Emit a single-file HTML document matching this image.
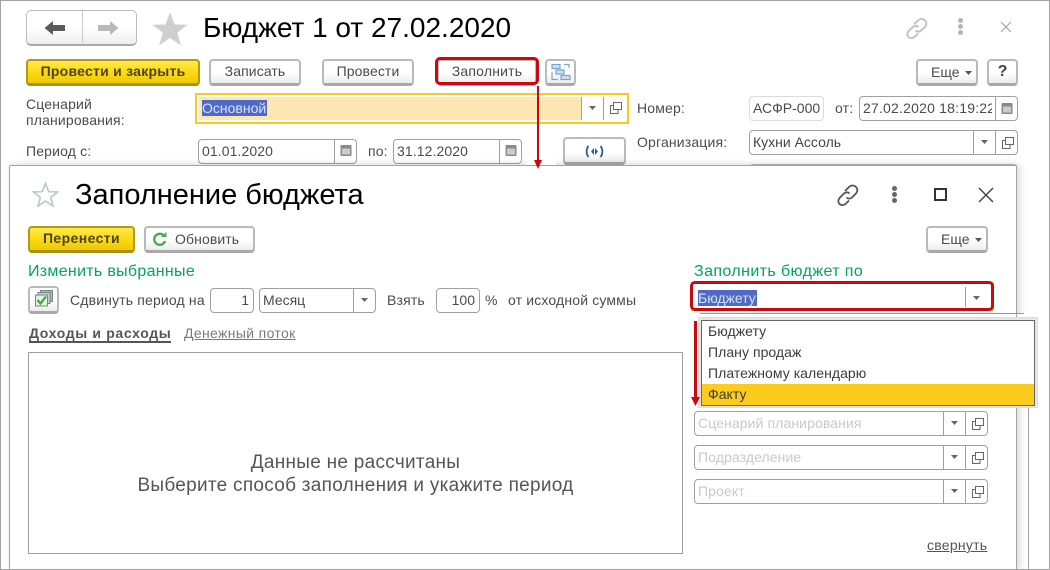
<!DOCTYPE html>
<html><head><meta charset="utf-8">
<style>
html,body{margin:0;padding:0}
body{width:1050px;height:570px;overflow:hidden;position:relative;background:#fff;font-family:"Liberation Sans",sans-serif;font-size:14px;color:#4b4b4b}
#r{position:absolute;left:0;top:0;width:1050px;height:570px;overflow:hidden}
#r div,#r svg{position:absolute;box-sizing:border-box}
.t{white-space:nowrap;line-height:16px;letter-spacing:.16px}
.btn{background:linear-gradient(#fff 0%,#fff 55%,#ececec 100%);border:2px solid #bababa;border-bottom:3px solid #a9a9a9;border-radius:4px;text-align:center;line-height:21px;white-space:nowrap;color:#4b4b4b;letter-spacing:.1px}
.y{background:linear-gradient(#ffe94f 0%,#fddc16 45%,#eec900 100%);border:2px solid #b39a12;border-bottom:3px solid #a99010;font-weight:bold;color:#4a4420;letter-spacing:.25px}
.i{background:#fff;border:1px solid #a0a0a0;border-radius:4px;line-height:22px;padding-left:3px;white-space:nowrap;overflow:hidden;color:#4b4b4b}
.v{width:1px;background:#a0a0a0}
.sel{background:#5068c6;color:#d5e4f7;line-height:16px;white-space:nowrap}
.ph{color:#c9c9c9;white-space:nowrap;line-height:16px;letter-spacing:.1px}
.g{font-size:16px;color:#00a463;letter-spacing:.3px}
.m{color:#3c3c3c;letter-spacing:.05px}
</style></head><body><div id="r">

<!-- nav -->
<div style="left:26px;top:10px;width:111px;height:36px;border:1px solid #bbb;border-bottom:2px solid #aaa;border-radius:5px;background:linear-gradient(#fff 50%,#eee)"></div>
<div class="v" style="left:82px;top:11px;height:34px;background:#ccc"></div>
<svg style="left:44px;top:20px" width="22" height="16" viewBox="0 0 22 16"><path d="M0.5 8L9 1V5H21V11H9V15Z" fill="#5a5a5a"/></svg>
<svg style="left:97px;top:20px" width="22" height="16" viewBox="0 0 22 16"><path d="M21.500 8L13 1V5H1V11H13V15Z" fill="#b8b8b8"/></svg>
<svg style="left:152px;top:12px" width="36" height="34" viewBox="0 0 36 34"><path d="M18 0.500L22.500 12.500L35.500 12.800L25.200 20.800L29 33.500L18 26L7 33.500L10.800 20.800L0.500 12.800L13.500 12.500Z" fill="#cfcfcf"/></svg>
<div class="t" style="left:203px;top:12px;font-size:28px;line-height:32px;color:#000;letter-spacing:0">Бюджет 1 от 27.02.2020</div>

<!-- top-right icons -->
<svg style="left:904px;top:15px" width="25" height="25" viewBox="0 0 25 25" fill="none" stroke="#c4c4c4" stroke-width="2"><path d="M10 9L14 5.500C16 3.500 19 3.500 21 5.500C23 7.500 22.500 10 21 12L17 15.500C15.500 17 13 17 11.500 15.500"/><path d="M14.500 12C13 10.500 11 10.500 9 12L4.500 16C3 18 3 20.500 4.500 22C6.500 23.500 9 23.500 11 21.500L14 18.500"/></svg>
<div style="left:958px;top:18px;width:5px;height:5px;border-radius:3px;background:#b5b5b5"></div>
<div style="left:958px;top:24px;width:5px;height:5px;border-radius:3px;background:#b5b5b5"></div>
<div style="left:958px;top:30px;width:5px;height:5px;border-radius:3px;background:#b5b5b5"></div>
<svg style="left:1000px;top:21px" width="12" height="12" viewBox="0 0 12 12"><path d="M1 1L11 11M11 1L1 11" stroke="#a5a5a5" stroke-width="1.200"/></svg>

<!-- toolbar -->
<div class="btn y" style="left:26px;top:59px;width:174px;height:27px">Провести и закрыть</div>
<div class="btn" style="left:209px;top:59px;width:92px;height:27px">Записать</div>
<div class="btn" style="left:322px;top:59px;width:92px;height:27px">Провести</div>
<div class="btn" style="left:437px;top:59px;width:100px;height:27px;letter-spacing:.2px">Заполнить</div>
<div style="left:435px;top:57px;width:104px;height:28px;border:3px solid #c9080f;border-radius:5px"></div>
<div class="btn" style="left:545px;top:59px;width:31px;height:27px"></div>
<svg style="left:551px;top:63px" width="20" height="18" viewBox="0 0 20 18" fill="none" stroke="#7aa5c9" stroke-width="1.200"><rect x="1" y="1.500" width="8" height="4" fill="#cfe0ee"/><rect x="5" y="7" width="8" height="4" fill="#cfe0ee"/><rect x="10" y="12.500" width="9" height="4" fill="#cfe0ee"/><path d="M13 1.500H18V5M1 9V16.500H7"/></svg>
<div class="btn" style="left:916px;top:59px;width:62px;height:27px"></div>
<div class="t" style="left:931px;top:64px;letter-spacing:0">Еще</div>
<svg style="left:965px;top:71px" width="7" height="4"><path d="M0 0H7L3.500 4Z" fill="#555"/></svg>
<div class="btn" style="left:987px;top:59px;width:31px;height:27px;font-weight:bold;font-size:16px;color:#444">?</div>

<!-- form row 1 -->
<div class="t" style="left:26px;top:96px">Сценарий</div>
<div class="t" style="left:26px;top:112px">планирования:</div>
<div style="left:195px;top:93px;width:434px;height:31px;border:2px solid #fbc91d;background:#fff"></div>
<div style="left:199px;top:97px;width:382px;height:23px;background:#fde6b1"></div>
<div class="sel" style="left:202px;top:100px;width:65px;height:16px">Основной</div>
<div class="v" style="left:581px;top:97px;height:23px"></div>
<div class="v" style="left:603px;top:97px;height:23px"></div>
<svg style="left:588px;top:105px" width="9" height="6"><path d="M1 1H8L4.500 5Z" fill="#666"/></svg>
<svg style="left:610px;top:102px" width="12" height="12" viewBox="0 0 12 12" fill="none" stroke="#666"><rect x="3.500" y="0.500" width="8" height="7"/><path d="M3.500 3.500H0.500V11.500H8V7.500"/></svg>

<div class="t" style="left:637px;top:100px">Номер:</div>
<div class="i" style="left:749px;top:96px;width:75px;height:25px;border-color:#dcdcdc">АСФР-000</div>
<div class="t" style="left:835px;top:100px">от:</div>
<div class="i" style="left:859px;top:96px;width:159px;height:25px"><span style="display:block;width:129px;overflow:hidden;letter-spacing:.2px">27.02.2020 18:19:22</span></div>
<div class="v" style="left:995px;top:97px;height:23px"></div>

<!-- form row 2 -->
<div class="t" style="left:26px;top:143px">Период с:</div>
<div class="i" style="left:198px;top:139px;width:159px;height:25px;letter-spacing:.1px">01.01.2020</div>
<div class="v" style="left:334px;top:140px;height:24px"></div>
<div class="t" style="left:368px;top:143px">по:</div>
<div class="i" style="left:393px;top:139px;width:129px;height:25px;letter-spacing:.1px">31.12.2020</div>
<div class="v" style="left:499px;top:140px;height:24px"></div>
<svg style="left:340px;top:144px" width="12" height="13" viewBox="0 0 12 13"><rect x="0.500" y="1" width="11" height="11" rx="1" fill="#8a8a8a"/><rect x="2" y="4.500" width="8" height="6" fill="#ccc"/></svg>
<svg style="left:505px;top:144px" width="12" height="13" viewBox="0 0 12 13"><rect x="0.500" y="1" width="11" height="11" rx="1" fill="#8a8a8a"/><rect x="2" y="4.500" width="8" height="6" fill="#ccc"/></svg>
<svg style="left:1001px;top:102px" width="12" height="13" viewBox="0 0 12 13"><rect x="0.500" y="1" width="11" height="11" rx="1" fill="#8a8a8a"/><rect x="2" y="4.500" width="8" height="6" fill="#ccc"/></svg>
<div class="btn" style="left:563px;top:137px;width:63px;height:28px"></div>
<svg style="left:585px;top:145px" width="19" height="13" viewBox="0 0 19 13"><path d="M3.500 1C1 4 1 9 3.500 12M15.500 1C18 4 18 9 15.500 12" fill="none" stroke="#2f5f86" stroke-width="1.800"/><path d="M9 3V10L6 6.500ZM10 3V10L13 6.500Z" fill="#2f5f86"/></svg>
<div class="t" style="left:637px;top:134px">Организация:</div>
<div class="i" style="left:749px;top:130px;width:269px;height:25px;color:#444">Кухни Ассоль</div>
<div class="v" style="left:973px;top:131px;height:23px"></div>
<div class="v" style="left:995px;top:131px;height:23px"></div>
<svg style="left:980px;top:139px" width="9" height="6"><path d="M1 1H8L4.500 5Z" fill="#666"/></svg>
<svg style="left:1002px;top:137px" width="12" height="12" viewBox="0 0 12 12" fill="none" stroke="#666"><rect x="3.500" y="0.500" width="8" height="7"/><path d="M3.500 3.500H0.500V11.500H8V7.500"/></svg>

<!-- dialog -->
<div style="left:750px;top:164px;width:267px;height:3px;border:1px solid #bbb;border-bottom:0;border-radius:3px 3px 0 0"></div>
<div style="left:9px;top:165px;width:1008px;height:406px;background:#fff;border:1px solid #a3a3a3;border-radius:2px;box-shadow:0 -3px 6px rgba(0,0,0,.08),6px 0 6px -1px rgba(0,0,0,.09)"></div>
<div class="v" style="left:1028px;top:408px;height:161px"></div>
<div style="left:526px;top:155px;width:30px;height:10px;background:#fff"></div>

<svg style="left:32px;top:182px" width="27" height="25" viewBox="0 0 27 25"><path d="M13.500 1.500L16.700 9.700L25.500 10L18.600 15.500L21 24L13.500 19L6 24L8.400 15.500L1.500 10L10.300 9.700Z" fill="#fff" stroke="#bcc0c6" stroke-width="1.500"/></svg>
<div class="t" style="left:75px;top:179px;font-size:29px;line-height:32px;color:#000;letter-spacing:0">Заполнение бюджета</div>

<svg style="left:835px;top:182px" width="25" height="25" viewBox="0 0 25 25" fill="none" stroke="#555" stroke-width="1.800"><path d="M10 9L14 5C16 3 19 3 21 5C23 7 22.500 9.500 21 11.500L17 15.500C15.500 17 13 17 11.500 15.500"/><path d="M14.500 11.500C13 10 11 10 9 11.500L4.500 16C3 18 3 20.500 4.500 22C6.500 23.500 9 23.500 11 21.500L14 18.500"/></svg>
<div style="left:892px;top:186px;width:5px;height:5px;border-radius:3px;background:#666"></div>
<div style="left:892px;top:192px;width:5px;height:5px;border-radius:3px;background:#666"></div>
<div style="left:892px;top:198px;width:5px;height:5px;border-radius:3px;background:#666"></div>
<div style="left:934px;top:188px;width:13px;height:13px;border:2px solid #333"></div>
<svg style="left:978px;top:187px" width="16" height="16" viewBox="0 0 16 16"><path d="M1 1L15 15M15 1L1 15" stroke="#444" stroke-width="1.500"/></svg>

<div class="btn y" style="left:28px;top:226px;width:107px;height:27px;letter-spacing:.4px">Перенести</div>
<div class="btn" style="left:144px;top:226px;width:111px;height:27px"></div>
<div class="t" style="left:175px;top:231px;letter-spacing:.1px">Обновить</div>
<svg style="left:152px;top:232px" width="15" height="15" viewBox="0 0 15 15" fill="none"><path d="M12.500 4.500A5.500 5.500 0 1 0 13 9" stroke="#3fae49" stroke-width="2.400"/><path d="M9 5H14.500V0Z" fill="#3fae49"/></svg>
<div class="btn" style="left:926px;top:226px;width:62px;height:27px"></div>
<div class="t" style="left:941px;top:231px;letter-spacing:0">Еще</div>
<svg style="left:975px;top:238px" width="7" height="4"><path d="M0 0H7L3.500 4Z" fill="#555"/></svg>

<div class="t g" style="left:28px;top:264px">Изменить выбранные</div>
<div class="btn" style="left:28px;top:286px;width:31px;height:28px"></div>
<svg style="left:35px;top:290px" width="18" height="17" viewBox="0 0 18 17"><rect x="5.500" y="0.500" width="12" height="11" fill="#aeb9b5" stroke="#6f8a80"/><rect x="3" y="2.500" width="12" height="11" fill="#c4d0cb" stroke="#6f8a80"/><rect x="0.500" y="5" width="12" height="11" fill="#e6efe9" stroke="#6f8a80"/><path d="M2.500 10L5.500 13.500L11 6.500" fill="none" stroke="#45a52f" stroke-width="2.200"/></svg>
<div class="t" style="left:70px;top:292px">Сдвинуть период на</div>
<div class="i" style="left:210px;top:288px;width:44px;height:25px;text-align:right;padding:0 4px 0 0">1</div>
<div class="i" style="left:259px;top:288px;width:117px;height:25px">Месяц</div>
<div class="v" style="left:353px;top:289px;height:23px"></div>
<svg style="left:360px;top:297px" width="9" height="6"><path d="M1 1H8L4.500 5Z" fill="#666"/></svg>
<div class="t" style="left:387px;top:292px">Взять</div>
<div class="i" style="left:436px;top:288px;width:44px;height:25px;text-align:right;padding:0 4px 0 0">100</div>
<div class="t" style="left:485px;top:292px">%</div>
<div class="t" style="left:508px;top:292px">от исходной суммы</div>

<div class="t" style="left:29px;top:325px;font-weight:bold;letter-spacing:.65px;color:#555">Доходы и расходы</div>
<div style="left:29px;top:341px;width:142px;height:2px;background:#555"></div>
<div class="t" style="left:184px;top:325px;color:#7a7a7a;text-decoration:underline;letter-spacing:.35px">Денежный поток</div>

<div style="left:28px;top:352px;width:655px;height:202px;border:1px solid #a0a0a0;background:#fff"></div>
<div class="t" style="left:28px;top:451px;width:655px;text-align:center;font-size:19px;line-height:23px;color:#555;letter-spacing:.28px">Данные не рассчитаны<br>Выберите способ заполнения и укажите период</div>

<!-- right panel -->
<div class="t g" style="left:694px;top:264px;letter-spacing:.4px">Заполнить бюджет по</div>
<div style="left:691px;top:282px;width:303px;height:29px;background:#fff;border:2px solid #fbc91d"></div>
<div style="left:690px;top:281px;width:304px;height:30px;border:3px solid #c9080f;border-radius:5px"></div>
<div class="sel" style="left:698px;top:290px;width:59px;height:16px">Бюджету</div>
<div class="v" style="left:965px;top:287px;height:20px"></div>
<svg style="left:972px;top:295px" width="9" height="6"><path d="M1 1H8L4.500 5Z" fill="#666"/></svg>

<div class="i ph" style="left:694px;top:411px;width:294px;height:25px;color:#c9c9c9;line-height:23px">Сценарий планирования</div>
<div class="v" style="left:943px;top:412px;height:23px"></div><div class="v" style="left:965px;top:412px;height:23px"></div>
<svg style="left:950px;top:420px" width="9" height="6"><path d="M1 1H8L4.500 5Z" fill="#666"/></svg>
<svg style="left:972px;top:418px" width="12" height="12" viewBox="0 0 12 12" fill="none" stroke="#666"><rect x="3.500" y="0.500" width="8" height="7"/><path d="M3.500 3.500H0.500V11.500H8V7.500"/></svg>

<div class="i ph" style="left:694px;top:445px;width:294px;height:25px;color:#c9c9c9;line-height:23px">Подразделение</div>
<div class="v" style="left:943px;top:446px;height:23px"></div><div class="v" style="left:965px;top:446px;height:23px"></div>
<svg style="left:950px;top:454px" width="9" height="6"><path d="M1 1H8L4.500 5Z" fill="#666"/></svg>
<svg style="left:972px;top:452px" width="12" height="12" viewBox="0 0 12 12" fill="none" stroke="#666"><rect x="3.500" y="0.500" width="8" height="7"/><path d="M3.500 3.500H0.500V11.500H8V7.500"/></svg>

<div class="i ph" style="left:694px;top:479px;width:294px;height:25px;color:#c9c9c9;line-height:23px">Проект</div>
<div class="v" style="left:943px;top:480px;height:23px"></div><div class="v" style="left:965px;top:480px;height:23px"></div>
<svg style="left:950px;top:488px" width="9" height="6"><path d="M1 1H8L4.500 5Z" fill="#666"/></svg>
<svg style="left:972px;top:486px" width="12" height="12" viewBox="0 0 12 12" fill="none" stroke="#666"><rect x="3.500" y="0.500" width="8" height="7"/><path d="M3.500 3.500H0.500V11.500H8V7.500"/></svg>

<div class="t" style="left:927px;top:537px;text-decoration:underline;color:#555;letter-spacing:.25px">свернуть</div>

<!-- popup -->
<div style="left:1017px;top:314px;width:21px;height:3px;background:#fff"></div>
<div style="left:700px;top:313px;width:324px;height:1px;background:#999"></div>
<div style="left:698px;top:317px;width:340px;height:91px;background:#e6e6e6;border:1px solid #ddd"></div>
<div style="left:701px;top:320px;width:334px;height:86px;background:#fff;border:1px solid #666"></div>
<div style="left:702px;top:384px;width:332px;height:21px;background:#fbcb1d"></div>
<div class="t m" style="left:708px;top:323px">Бюджету</div>
<div class="t m" style="left:708px;top:344px">Плану продаж</div>
<div class="t m" style="left:708px;top:365px">Платежному календарю</div>
<div class="t m" style="left:708px;top:386px">Факту</div>

<!-- red arrows -->
<div style="left:537px;top:86px;width:2px;height:75px;background:#c9080f"></div>
<svg style="left:534px;top:160px" width="8" height="9"><path d="M0 0H8L4 9Z" fill="#c9080f"/></svg>
<div style="left:694px;top:321px;width:3px;height:80px;background:#c9080f"></div>
<svg style="left:691px;top:397px" width="9" height="9"><path d="M0 0H9L4.500 9Z" fill="#c9080f"/></svg>

<!-- outer frame on top -->
<div style="left:0;top:0;width:1050px;height:570px;border:1px solid #a3a3a3"></div>
</div></body></html>
